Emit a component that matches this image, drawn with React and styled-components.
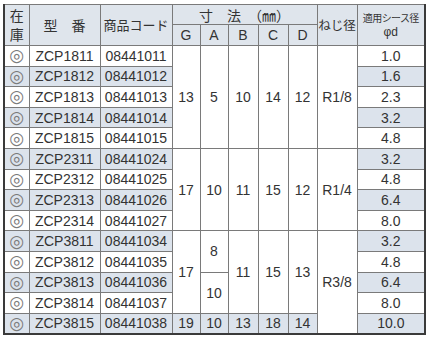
import React from "react";
import styled, { createGlobalStyle } from "styled-components";

const GlobalStyle = createGlobalStyle`
  body {
    margin: 0;
    background: #ffffff;
    font-family: "Liberation Sans", "Noto Sans CJK JP", Arial, sans-serif;
    color: #333333;
  }
`;

const Wrap = styled.div`
  padding: 4px 0 0 3px;
`;

const Table = styled.table`
  border-collapse: collapse;
  table-layout: fixed;
  width: 421px;
  font-family: "Liberation Sans", "Noto Sans CJK JP", Arial, sans-serif;
  border-top: 1px solid #8a8a8a;
  border-left: 2px solid #3a3a3a;
  border-right: 2px solid #3a3a3a;
  border-bottom: 2px solid #3a3a3a;
`;

const Col = styled.col`
  width: ${(p) => p.$w}px;
`;

const Head = styled.th`
  background: #dfe5ec;
  border: 1px solid #7a7a7a;
  font-weight: normal;
  font-family: "Noto Sans CJK JP", "Liberation Sans", sans-serif;
  font-size: ${(p) => p.$size || 14}px;
  line-height: ${(p) => p.$lh || "16px"};
  letter-spacing: ${(p) => p.$ls || 0}px;
  padding: 0;
  height: ${(p) => p.$h || 19}px;
  vertical-align: middle;
  text-align: center;
  white-space: nowrap;
  overflow: hidden;
  color: #333;
`;

const Sub = styled.span`
  display: block;
  font-family: "Liberation Sans", sans-serif;
  font-size: ${(p) => p.$size || 14}px;
  line-height: ${(p) => p.$lh || "15px"};
  letter-spacing: 0;
`;

const Row = styled.tr`
  height: 20.6px;
`;

const Cell = styled.td`
  background: ${(p) => (p.$hl ? "#dce3ec" : "#ffffff")};
  border: 1px solid #7a7a7a;
  padding: 0;
  font-size: 14px;
  line-height: 1;
  text-align: center;
  vertical-align: middle;
  white-space: nowrap;
  color: #333;
`;

const Stock = styled(Cell)`
  color: #7a7a7a;
  font-family: "DejaVu Sans", "Noto Sans CJK JP", sans-serif;
  font-size: 17px;
  line-height: 15px;
`;

const rows = [
  { m: "ZCP1811", c: "08441011", d: "1.0", dims: [["13", 5], ["5", 5], ["10", 5], ["14", 5], ["12", 5]], s: ["R1/8", 5] },
  { m: "ZCP1812", c: "08441012", d: "1.6", hl: true },
  { m: "ZCP1813", c: "08441013", d: "2.3" },
  { m: "ZCP1814", c: "08441014", d: "3.2", hl: true },
  { m: "ZCP1815", c: "08441015", d: "4.8" },
  { m: "ZCP2311", c: "08441024", d: "3.2", hl: true, dims: [["17", 4], ["10", 4], ["11", 4], ["15", 4], ["12", 4]], s: ["R1/4", 4] },
  { m: "ZCP2312", c: "08441025", d: "4.8" },
  { m: "ZCP2313", c: "08441026", d: "6.4", hl: true },
  { m: "ZCP2314", c: "08441027", d: "8.0" },
  { m: "ZCP3811", c: "08441034", d: "3.2", hl: true, dims: [["17", 4], ["8", 2], ["11", 4], ["15", 4], ["13", 4]], s: ["R3/8", 5] },
  { m: "ZCP3812", c: "08441035", d: "4.8" },
  { m: "ZCP3813", c: "08441036", d: "6.4", hl: true, dims: [["10", 2]] },
  { m: "ZCP3814", c: "08441037", d: "8.0" },
  { m: "ZCP3815", c: "08441038", d: "10.0", hl: true, dims: [["19", 1], ["10", 1], ["13", 1], ["18", 1], ["14", 1]], dimHl: true },
];

const widths = [25, 71, 72, 28, 28, 30, 30, 29, 40, 68];

export default function App() {
  return (
    <>
      <GlobalStyle />
      <Wrap>
        <Table>
          <colgroup>
            {widths.map((w, i) => (
              <Col key={i} $w={w} />
            ))}
          </colgroup>
          <thead>
            <tr>
              <Head rowSpan={2} $size={14} $lh="19px">
                在<br />庫
              </Head>
              <Head rowSpan={2} $size={14}>型　番</Head>
              <Head rowSpan={2} $size={13}>商品コード</Head>
              <Head colSpan={5} $size={14}>寸　法　（㎜）</Head>
              <Head rowSpan={2} $size={12.5}>ねじ径</Head>
              <Head rowSpan={2} $size={10} $lh="14px" $ls={-0.6}>
                適用シース径
                <Sub $size={12} $lh="14px">φd</Sub>
              </Head>
            </tr>
            <tr>
              {["G", "A", "B", "C", "D"].map((k) => (
                <Head key={k} $h={20}>
                  <Sub>{k}</Sub>
                </Head>
              ))}
            </tr>
          </thead>
          <tbody>
            {rows.map((r) => (
              <Row key={r.m}>
                <Stock $hl={r.hl}>◎</Stock>
                <Cell $hl={r.hl}>{r.m}</Cell>
                <Cell $hl={r.hl}>{r.c}</Cell>
                {(r.dims || []).map(([v, span], i) => (
                  <Cell key={i} rowSpan={span} $hl={r.dimHl}>
                    {v}
                  </Cell>
                ))}
                {r.s && <Cell rowSpan={r.s[1]}>{r.s[0]}</Cell>}
                <Cell $hl={r.hl}>{r.d}</Cell>
              </Row>
            ))}
          </tbody>
        </Table>
      </Wrap>
    </>
  );
}
